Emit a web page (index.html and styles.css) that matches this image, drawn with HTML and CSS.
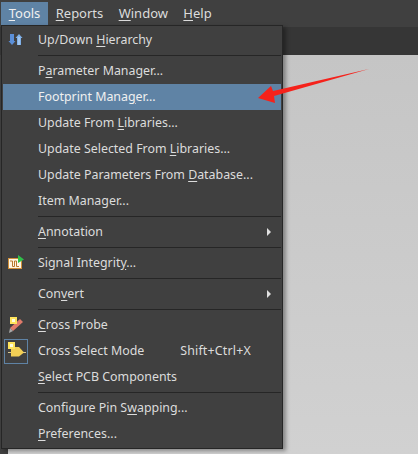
FILE: index.html
```html
<!DOCTYPE html>
<html lang="en">
<head>
    <meta charset="UTF-8">
    <meta name="viewport" content="width=device-width, initial-scale=1.0">
    <title>Tools menu</title>
    <link rel="stylesheet" href="styles.css">
</head>
<body>
    <div class="menubar">
        <div class="menubar-item active"><u>T</u>ools</div>
        <div class="menubar-item"><u>R</u>eports</div>
        <div class="menubar-item"><u>W</u>indow</div>
        <div class="menubar-item"><u>H</u>elp</div>
    </div>
    <div class="toolbar"></div>
    <div class="workspace">
        <div class="side"></div>
        <div class="canvas"></div>
    </div>

    <div class="menu">
        <div class="row">
            <span class="icon">
                <svg width="16" height="16" viewBox="0 0 16 16">
                    <path d="M3 2h4v7h1.500l-3.500 4-3.500-4H3z" fill="#5b8fd8"/>
                    <path d="M10 13V6H8.500L12 2l3.500 4H14v7z" fill="#7fb0e8"/>
                    <path d="M11.500 5h1v8h-1z" fill="#c6dcf5"/>
                </svg>
            </span>
            <span class="label">Up/Down <u>H</u>ierarchy</span>
        </div>
        <div class="sep"></div>
        <div class="row"><span class="icon"></span><span class="label">P<u>a</u>rameter Manager...</span></div>
        <div class="row selected"><span class="icon"></span><span class="label">Footprint Mana<u>g</u>er...</span></div>
        <div class="row"><span class="icon"></span><span class="label">Update From <u>L</u>ibraries...</span></div>
        <div class="row"><span class="icon"></span><span class="label">Update Selected From <u>L</u>ibraries...</span></div>
        <div class="row"><span class="icon"></span><span class="label">Update Parameters From <u>D</u>atabase...</span></div>
        <div class="row"><span class="icon"></span><span class="label">Item Manager...</span></div>
        <div class="sep"></div>
        <div class="row"><span class="icon"></span><span class="label"><u>A</u>nnotation</span><span class="caret"></span></div>
        <div class="sep"></div>
        <div class="row">
            <span class="icon">
                <svg width="18" height="16" viewBox="0 0 18 16">
                    <rect x="1.500" y="3.500" width="13" height="10" fill="#fff6e2" stroke="#d08f3a"/>
                    <path d="M3 6h2.500v5.500h2V6h2v5.500H12" fill="none" stroke="#b9772c"/>
                    <path d="M11 0l6 4.500-6 3.500z" fill="#2fc04a"/>
                </svg>
            </span>
            <span class="label">Signal Integrit<u>y</u>...</span>
        </div>
        <div class="sep"></div>
        <div class="row"><span class="icon"></span><span class="label">Con<u>v</u>ert</span><span class="caret"></span></div>
        <div class="sep"></div>
        <div class="row">
            <span class="icon">
                <svg width="16" height="16" viewBox="0 0 16 16">
                    <path d="M13 2l3 3-10 9-3-3z" fill="#e07a6a"/>
                    <path d="M3 11l3 3-4 2z" fill="#a8a8a8"/>
                    <rect x="3" y="0" width="7" height="7" fill="#ffe45c"/>
                    <rect x="5" y="2" width="3" height="3" fill="#fffde0"/>
                </svg>
            </span>
            <span class="label"><u>C</u>ross Probe</span>
        </div>
        <div class="row">
            <span class="icon checked">
                <svg width="20" height="20" viewBox="0 0 20 20">
                    <path d="M1 11.500h18" stroke="#d8c890"/>
                    <path d="M4 6h8l5 5.500-5 4H4z" fill="#f2cf55"/>
                    <rect x="1" y="1" width="7" height="7" fill="#ffe45c"/>
                    <rect x="3" y="3" width="3" height="3" fill="#fffde0"/>
                </svg>
            </span>
            <span class="label">Cross Select Mode</span>
            <span class="shortcut">Shift+Ctrl+X</span>
        </div>
        <div class="row"><span class="icon"></span><span class="label"><u>S</u>elect PCB Components</span></div>
        <div class="sep"></div>
        <div class="row"><span class="icon"></span><span class="label">Configure Pin S<u>w</u>apping...</span></div>
        <div class="row"><span class="icon"></span><span class="label"><u>P</u>references...</span></div>
    </div>

    <svg class="arrow" width="418" height="454" viewBox="0 0 418 454">
        <path d="M369 69L273 91 271 86 258 98 275 103 274 96z" fill="#f5221b"/>
    </svg>
</body>
</html>
```

FILE: styles.css
```css
body {
    margin: 0;
    width: 418px;
    height: 454px;
    overflow: hidden;
    display: flex;
    flex-direction: column;
    background: #3f3f3f;
    font-family: "Noto Sans", sans-serif;
    font-size: 12.4px;
    color: #dcdcdc;
}
u {
    text-underline-offset: 2px;
}

/* top bar */
.menubar {
    height: 27px;
    padding: 2px 0 0 1px;
    box-sizing: border-box;
    display: flex;
    align-items: flex-start;
    background: #404040;
    font-size: 13px;
}
.menubar-item {
    height: 23px;
    line-height: 23px;
    padding: 0 7.7px;
}
.menubar-item.active {
    background: #5f83a5;
    color: #f0f0f0;
}
.toolbar {
    height: 28px;
    background: #363636;
}
.workspace {
    flex: 1;
    display: flex;
}
.side {
    width: 8px;
    background: #3f3f3f;
}
.canvas {
    flex: 1;
    background: linear-gradient(#c5c5c5, #d1d1d1);
}

/* dropdown */
.menu {
    position: absolute;
    left: 1px;
    top: 25px;
    width: 282px;
    height: 424px;
    box-sizing: border-box;
    padding: 1px;
    background: #404040;
    border: 1px solid #262626;
    box-shadow: 3px 2px 4px rgba(0, 0, 0, 0.35);
}
.row {
    height: 26px;
    display: flex;
    align-items: center;
    padding-right: 10px;
}
.row.selected {
    background: #5f83a5;
    color: #f0f0f0;
}
.icon {
    width: 35px;
    height: 16px;
    flex: none;
    display: flex;
    align-items: center;
    padding-left: 4px;
    box-sizing: border-box;
}
.icon.checked {
    position: relative;
}
.icon.checked::before {
    content: "";
    position: absolute;
    left: 1px;
    top: -4px;
    width: 22px;
    height: 23px;
    border: 1px solid #5f83a5;
}
.icon svg {
    position: relative;
    flex: none;
}
.label {
    flex: 1;
    white-space: nowrap;
    padding-bottom: 2px;
}
.shortcut {
    margin-right: 20px;
    padding-bottom: 2px;
    letter-spacing: 0.2px;
}
.caret {
    width: 0;
    height: 0;
    border-left: 4px solid #e0e0e0;
    border-top: 4px solid transparent;
    border-bottom: 4px solid transparent;
}
.sep {
    height: 1px;
    margin: 2px 0 2px 35px;
    background: #262626;
}

.arrow {
    position: absolute;
    left: 0;
    top: 0;
    pointer-events: none;
}
```
